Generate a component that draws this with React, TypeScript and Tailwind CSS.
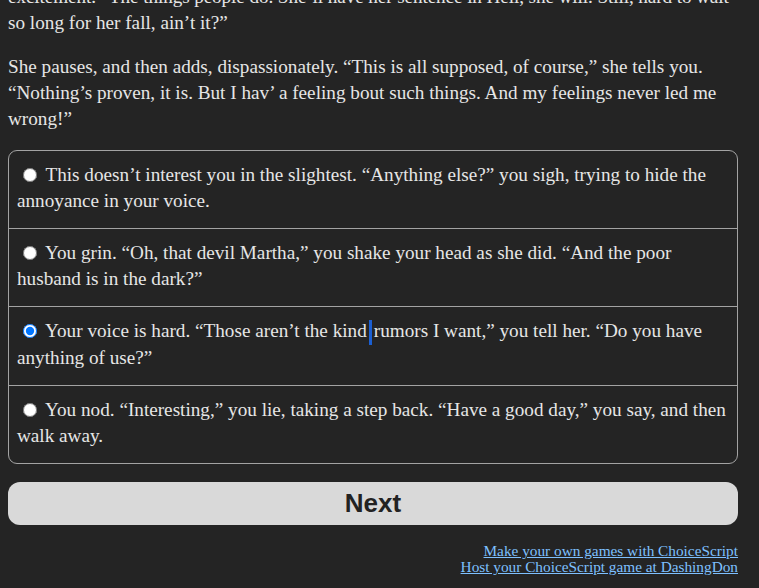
import { useState } from "react";

type Choice = { id: number; text: React.ReactNode };

const choices: Choice[] = [
    {
        id: 0,
        text: "This doesn’t interest you in the slightest. “Anything else?” you sigh, trying to hide the annoyance in your voice.",
    },
    {
        id: 1,
        text: "You grin. “Oh, that devil Martha,” you shake your head as she did. “And the poor husband is in the dark?”",
    },
    {
        id: 2,
        text: (
            <>
                Your voice is hard. “Those aren’t the kind
                <span className="inline-block w-[3px] h-[25px] mx-[2px] bg-[#1b5fd2] align-middle" />
                rumors I want,” you tell her. “Do you have anything of use?”
            </>
        ),
    },
    {
        id: 3,
        text: "You nod. “Interesting,” you lie, taking a step back. “Have a good day,” you say, and then walk away.",
    },
];

export default function App() {
    const [selected, setSelected] = useState<number>(2);

    return (
        <div className="h-[588px] overflow-hidden bg-[#242424] text-[#e6e6e6] font-['Liberation_Serif',serif] text-[19.2px] leading-[26px]">
            <div className="w-[730px] ml-[8px] -mt-[16px]">
                {/* scrolled: only the tail of this paragraph is on screen */}
                <p className="mb-[18px]">
                    <span className="whitespace-nowrap tracking-[-0.1px]">
                        excitement. “The things people do. She’ll have her sentence in Hell, she will. Still, hard to wait
                    </span>
                    <br />
                    so long for her fall, ain’t it?”
                </p>
                <p className="mb-[18px]">
                    She pauses, and then adds, dispassionately. “This is all supposed, of course,” she tells you.
                    “Nothing’s proven, it is. But I hav’ a feeling bout such things. And my feelings never led me
                    wrong!”
                </p>

                {/* choice list */}
                <div className="border border-[#a3a3a3] rounded-[9px]">
                    {choices.map((c, i) => (
                        <label
                            key={c.id}
                            className={
                                "block pl-[8px] pr-[8px] pt-[11px] pb-[14px] cursor-pointer" +
                                (i > 0 ? " border-t border-[#a3a3a3]" : "")
                            }
                        >
                            <input
                                type="radio"
                                name="choice"
                                checked={selected === c.id}
                                onChange={() => setSelected(c.id)}
                                className="w-[14px] h-[14px] ml-[6px] mr-[4px] my-0 align-[-1px]"
                            />{" "}
                            {c.text}
                        </label>
                    ))}
                </div>

                <button
                    type="button"
                    className="mt-[18px] w-full h-[43px] rounded-[12px] bg-[#d9d9d9] text-[#222] font-['Liberation_Sans',sans-serif] font-bold text-[26px] leading-[43px]"
                >
                    Next
                </button>

                <div className="mt-[18px] text-right text-[15.3px] leading-[16px]">
                    <a href="#" className="text-[#7ec0ff] underline">
                        Make your own games with ChoiceScript
                    </a>
                    <br />
                    <a href="#" className="text-[#7ec0ff] underline">
                        Host your ChoiceScript game at DashingDon
                    </a>
                </div>
            </div>
        </div>
    );
}
